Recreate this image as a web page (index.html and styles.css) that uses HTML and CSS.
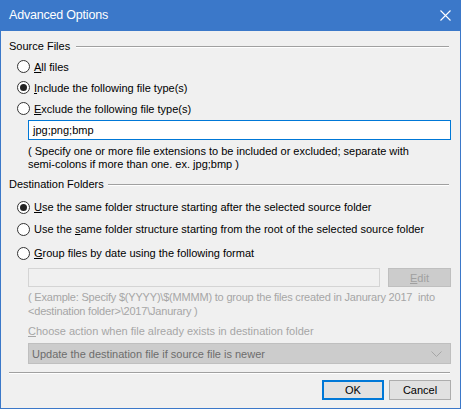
FILE: index.html
```html
<!DOCTYPE html>
<html>
<head>
<meta charset="utf-8">
<link rel="stylesheet" href="styles.css">
</head>
<body>
<div class="window">
  <div class="titlebar">
    <span class="title">Advanced Options</span>
    <svg class="close" width="11" height="11" viewBox="0 0 11 11"><path d="M0.5 0.5 L10.5 10.5 M10.5 0.5 L0.5 10.5" stroke="#fff" stroke-width="1.1" fill="none"/></svg>
  </div>
  <div class="body">
    <div class="group-header"><span>Source Files</span><div class="rule"></div></div>
    <div class="radio-row"><span class="radio"></span><span><u>A</u>ll files</span></div>
    <div class="radio-row"><span class="radio checked"></span><span><u>I</u>nclude the following file type(s)</span></div>
    <div class="radio-row"><span class="radio"></span><span><u>E</u>xclude the following file type(s)</span></div>
    <div class="text-input">jpg;png;bmp</div>
    <div class="help">( Specify one or more file extensions to be included or excluded; separate with<br>semi-colons if more than one. ex. jpg;bmp )</div>
    <div class="group-header gh2"><span>Destination Folders</span><div class="rule"></div></div>
    <div class="radio-row r22"><span class="radio checked"></span><span><u>U</u>se the same folder structure starting after the selected source folder</span></div>
    <div class="radio-row r22"><span class="radio"></span><span>Use the <u>s</u>ame folder structure starting from the root of the selected source folder</span></div>
    <div class="radio-row r22 r-gap"><span class="radio"></span><span><u>G</u>roup files by date using the following format</span></div>
    <div class="format-row">
      <div class="disabled-input"></div>
      <div class="disabled-btn"><u>E</u>dit</div>
    </div>
    <div class="example">( Example: Specify $(YYYY)\$(MMMM) to group the files created in Janurary 2017&nbsp; into<br>&lt;destination folder&gt;\2017\Janurary )</div>
    <div class="choose"><u>C</u>hoose action when file already exists in destination folder</div>
    <div class="dropdown">
      <span>Update the destination file if source file is newer</span>
      <svg class="chev" width="11" height="6" viewBox="0 0 11 6"><path d="M0.5 0.5 L5.5 5.5 L10.5 0.5" stroke="#a6a6a6" stroke-width="1" fill="none"/></svg>
    </div>
    <div class="separator"></div>
    <div class="buttons">
      <div class="btn btn-default">OK</div>
      <div class="btn">Cancel</div>
    </div>
  </div>
</div>
</body>
</html>
```
FILE: styles.css
```css
html, body {
  margin: 0;
  padding: 0;
  background: #f0f0f0;
}
.window {
  width: 461px;
  height: 409px;
  display: flex;
  flex-direction: column;
  font-family: "Liberation Sans", Arial, sans-serif;
  font-size: 11px;
  color: #000;
  overflow: hidden;
}
.titlebar {
  flex: none;
  height: 31px;
  background: #3b78c9;
  display: flex;
  align-items: center;
  justify-content: space-between;
  padding: 0 10px 1px 9px;
  box-sizing: border-box;
}
.title {
  color: #fff;
  font-size: 12.5px;
  letter-spacing: -0.2px;
}
.close {
  display: block;
}
.body {
  flex: 1;
  min-height: 0;
  background: #f0f0f0;
  border: 1px solid #3b78c9;
  border-top: 0;
  padding: 7px 9px 0 8px;
  display: flex;
  flex-direction: column;
}
.body > * {
  flex: none;
}
.group-header {
  height: 16px;
  display: flex;
  align-items: center;
  gap: 6px;
  margin-right: 2px;
}
.gh2 {
  margin-top: 5px;
  gap: 4px;
}
.rule {
  flex: 1;
  height: 1px;
  background: #a0a0a0;
  border-bottom: 1px solid #fff;
  margin-top: 1px;
}
.radio-row {
  height: 21px;
  display: flex;
  align-items: center;
  gap: 4px;
  padding-left: 8px;
  white-space: nowrap;
}
.radio-row:nth-child(2) {
  margin-top: 2px;
}
.r22 {
  height: 22px;
}
.gh2 + .r22 {
  margin-top: 4px;
}
.r-gap {
  margin-top: 2px;
}
.radio {
  width: 13px;
  height: 13px;
  box-sizing: border-box;
  border: 1px solid #333;
  border-radius: 50%;
  background: #fff;
  display: flex;
  align-items: center;
  justify-content: center;
  flex: none;
}
.radio.checked::after {
  content: "";
  width: 7px;
  height: 7px;
  border-radius: 50%;
  background: #222;
}
.text-input {
  margin: 1px 0 0 19px;
  height: 20px;
  box-sizing: border-box;
  border: 1px solid #0078d7;
  background: #fff;
  padding: 0 4px;
  display: flex;
  align-items: center;
}
.help {
  margin: 5px 0 0 19px;
  line-height: 13px;
  white-space: nowrap;
}
.format-row {
  margin: 4px 0 0 19px;
  height: 19px;
  display: flex;
  gap: 8px;
}
.disabled-input {
  flex: 1;
  border: 1px solid #d4d4d4;
  background: #f0f0f0;
}
.disabled-btn {
  width: 63px;
  box-sizing: border-box;
  border: 1px solid #bfbfbf;
  background: #cccccc;
  color: #a0a0a0;
  display: flex;
  align-items: center;
  justify-content: center;
}
.example {
  margin: 3px 0 0 19px;
  line-height: 14px;
  color: #a6a6a6;
  white-space: nowrap;
  letter-spacing: -0.2px;
}
.choose {
  margin: 6px 0 0 19px;
  line-height: 14px;
  color: #a6a6a6;
  white-space: nowrap;
}
.dropdown {
  margin: 5px 0 0 19px;
  height: 21px;
  box-sizing: border-box;
  border: 1px solid #bfbfbf;
  background: #cccccc;
  color: #6d6d6d;
  display: flex;
  align-items: center;
  justify-content: space-between;
  padding: 0 8px 0 3px;
}
.chev {
  display: block;
}
.separator {
  margin-top: 8px;
  height: 1px;
  background: #a0a0a0;
  border-bottom: 1px solid #fff;
  margin-right: 1px;
}
.buttons {
  margin-top: 6px;
  display: flex;
  justify-content: flex-end;
  gap: 5px;
}
.btn {
  width: 62px;
  height: 20px;
  box-sizing: border-box;
  border: 1px solid #adadad;
  background: #e1e1e1;
  display: flex;
  align-items: center;
  justify-content: center;
}
.btn-default {
  border: 2px solid #0078d7;
}
```
